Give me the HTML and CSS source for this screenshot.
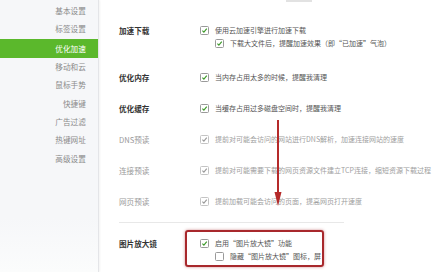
FILE: index.html
```html
<!DOCTYPE html>
<html>
<head>
<meta charset="utf-8">
<link rel="stylesheet" href="styles.css">
</head>
<body>
<div class="page">
  <div class="sidebar">
    <div class="nav-item">基本设置</div>
    <div class="nav-item">标签设置</div>
    <div class="nav-item active">优化加速</div>
    <div class="nav-item">移动和云</div>
    <div class="nav-item">鼠标手势</div>
    <div class="nav-item">快捷键</div>
    <div class="nav-item">广告过滤</div>
    <div class="nav-item">热键网址</div>
    <div class="nav-item">高级设置</div>
  </div>
  <div class="main">
    <div class="top-stub"></div>
    <div class="section first">
      <div class="label">加速下载</div>
      <div class="options">
        <div class="opt"><span class="cb"><svg viewBox="0 0 8 8"><path d="M1.6 4.2 L3.3 5.9 L6.6 1.8" /></svg></span>使用云加速引擎进行加速下载</div>
        <div class="opt sub"><span class="cb"><svg viewBox="0 0 8 8"><path d="M1.6 4.2 L3.3 5.9 L6.6 1.8" /></svg></span>下载大文件后，提醒加速效果（即“已加速”气泡）</div>
      </div>
    </div>
    <div class="section second">
      <div class="label">优化内存</div>
      <div class="options">
        <div class="opt"><span class="cb"><svg viewBox="0 0 8 8"><path d="M1.6 4.2 L3.3 5.9 L6.6 1.8" /></svg></span>当内存占用太多的时候，提醒我清理</div>
      </div>
    </div>
    <div class="section">
      <div class="label">优化缓存</div>
      <div class="options">
        <div class="opt"><span class="cb"><svg viewBox="0 0 8 8"><path d="M1.6 4.2 L3.3 5.9 L6.6 1.8" /></svg></span>当缓存占用过多磁盘空间时，提醒我清理</div>
      </div>
    </div>
    <div class="section disabled">
      <div class="label">DNS预读</div>
      <div class="options">
        <div class="opt"><span class="cb"><svg viewBox="0 0 8 8"><path d="M1.6 4.2 L3.3 5.9 L6.6 1.8" /></svg></span>提前对可能会访问的网站进行DNS解析，加速连接网站的速度</div>
      </div>
    </div>
    <div class="section disabled">
      <div class="label">连接预读</div>
      <div class="options">
        <div class="opt"><span class="cb"><svg viewBox="0 0 8 8"><path d="M1.6 4.2 L3.3 5.9 L6.6 1.8" /></svg></span>提前对可能需要下载的网页资源文件建立TCP连接，缩短资源下载过程</div>
      </div>
    </div>
    <div class="section disabled">
      <div class="label">网页预读</div>
      <div class="options">
        <div class="opt"><span class="cb"><svg viewBox="0 0 8 8"><path d="M1.6 4.2 L3.3 5.9 L6.6 1.8" /></svg></span>提前加载可能会访问的页面，提高网页打开速度</div>
      </div>
    </div>
    <div class="divider"></div>
    <div class="section last">
      <div class="label">图片放大镜</div>
      <div class="options">
        <div class="opt"><span class="cb"><svg viewBox="0 0 8 8"><path d="M1.6 4.2 L3.3 5.9 L6.6 1.8" /></svg></span>启用“图片放大镜”功能</div>
        <div class="opt sub"><span class="cb empty"></span>隐藏“图片放大镜”图标，屏</div>
      </div>
    </div>
    <div class="callout"></div>
    <svg class="arrow" viewBox="0 0 10 86"><line x1="5" y1="0" x2="5" y2="76" /><polygon points="1.5,72 8.5,72 5,86" /></svg>
  </div>
</div>
</body>
</html>
```
FILE: styles.css
```css
html, body {
  margin: 0;
  padding: 0;
  width: 439px;
  height: 272px;
  overflow: hidden;
  background: #ffffff;
  font-family: "Noto Sans CJK SC", "Noto Sans", sans-serif;
}
.page {
  display: flex;
  height: 272px;
}
.sidebar {
  width: 98px;
  flex: none;
  background: #f6f7f9;
  border-right: 1px solid #e4e5e8;
  box-shadow: 1px 0 2px rgba(0,0,0,0.05);
  padding-top: 2px;
  display: flex;
  flex-direction: column;
  background-image: linear-gradient(to bottom, #f6f7f9 80%, #fbfcfc 100%);
}
.nav-item {
  height: 18.4px;
  line-height: 18.4px;
  text-align: right;
  padding-right: 12px;
  font-size: 7.6px;
  color: #8a8a8a;
  letter-spacing: 0.1px;
}
.nav-item.active {
  background: #5bb82c;
  color: #ffffff;
  height: 19px;
  line-height: 19px;
}
.main {
  position: relative;
  flex: 1;
  padding-left: 20px;
  display: flex;
  flex-direction: column;
}
.top-stub {
  margin-left: 167px;
  width: 26px;
  height: 2px;
  background: #e2e2e2;
}
.section {
  display: flex;
  margin-top: 18px;
}
.section.first {
  margin-top: 21.5px;
}
.section.second {
  margin-top: 21px;
}
.section.last {
  margin-top: 13.5px;
}
.label {
  width: 81px;
  flex: none;
  font-size: 7.6px;
  line-height: 13px;
  color: #333333;
  font-weight: bold;
}
.options {
  display: flex;
  flex-direction: column;
}
.opt {
  display: flex;
  align-items: center;
  height: 13px;
  font-size: 7px;
  color: #555555;
  white-space: nowrap;
}
.opt.sub {
  margin-left: 15px;
}
.cb {
  width: 7px;
  height: 7px;
  border: 1px solid #9a9a9a;
  border-radius: 1.5px;
  background: #ffffff;
  margin-right: 6px;
  flex: none;
  display: flex;
}
.cb svg {
  width: 7px;
  height: 7px;
  fill: none;
  stroke: #3e9a2a;
  stroke-width: 1.3;
}
.disabled .label {
  color: #9a9a9a;
  font-weight: normal;
}
.disabled .opt {
  color: #a0a0a0;
}
.disabled .cb {
  border-color: #c4c4c4;
}
.disabled .cb svg {
  stroke: #9a9a9a;
}
.divider {
  width: 225px;
  height: 1px;
  background: #e8e8e8;
  margin-top: 14.5px;
}
.callout {
  position: absolute;
  left: 86px;
  top: 230px;
  width: 135px;
  height: 33px;
  border: 2px solid #a8282c;
  border-radius: 3px;
  box-shadow: 0 0 3px rgba(168,40,44,0.55);
}
.arrow {
  position: absolute;
  left: 174px;
  top: 120px;
  width: 10px;
  height: 86px;
}
.arrow line {
  stroke: #b52a2a;
  stroke-width: 2;
}
.arrow polygon {
  fill: #b52a2a;
}
```
